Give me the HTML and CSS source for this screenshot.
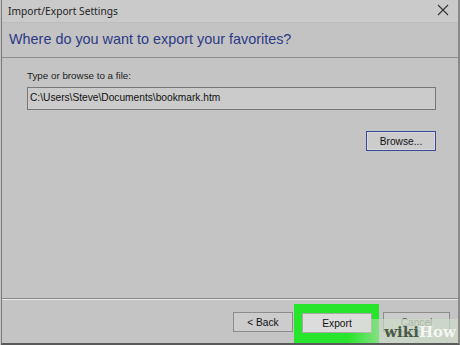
FILE: index.html
```html
<!DOCTYPE html>
<html>
<head>
<meta charset="utf-8">
<link rel="stylesheet" href="styles.css">
</head>
<body>
<div class="window">
  <div class="titlebar">
    <span class="title">Import/Export Settings</span>
    <svg class="close" width="12" height="12" viewBox="0 0 12 12"><path d="M1 1 L11 11 M11 1 L1 11" stroke="#333" stroke-width="1.1" fill="none"/></svg>
  </div>
  <div class="header">Where do you want to export your favorites?</div>
  <div class="content">
    <div class="label">Type or browse to a file:</div>
    <div class="field">C:\Users\Steve\Documents\bookmark.htm</div>
    <div class="browse-row"><div class="btn browse">Browse...</div></div>
  </div>
  <div class="footer">
    <div class="btn back">&lt; Back</div>
    <div class="highlight"><div class="btn export">Export</div></div>
    <div class="btn cancel">Cancel</div>
    <div class="watermark"><span class="wiki">wiki</span><span class="how">How</span></div>
  </div>
</div>
</body>
</html>
```

FILE: styles.css
```css
html, body {
  margin: 0;
  padding: 0;
  background: #c4c4c4;
}
.window {
  position: relative;
  width: 456px;
  height: 343px;
  border-left: 1px solid #7a7a7a;
  border-right: 2px solid #8a8a8a;
  border-bottom: 2px solid #5a5a5a;
  margin-left: 1px;
  background: #c4c4c4;
  display: flex;
  flex-direction: column;
  font-family: "Liberation Sans", Arial, sans-serif;
  overflow: hidden;
}
.titlebar {
  height: 22px;
  background: #cacaca;
  display: flex;
  align-items: center;
  justify-content: space-between;
  padding: 0 9px 0 6px;
  box-sizing: border-box;
}
.title {
  font-family: "Noto Sans", sans-serif;
  font-size: 10.2px;
  color: #222;
}
.close { margin-top: -2px; }
.header {
  height: 36px;
  box-sizing: border-box;
  padding: 6px 0 0 7px;
  background: #c3c3c3;
  border-top: 1px solid #bdbdbd;
  border-bottom: 1px solid #8f8f8f;
  color: #2c3a86;
  font-size: 14.4px;
  line-height: 20px;
}
.content {
  height: 241px;
  box-sizing: border-box;
  padding: 11px 22px 0 25px;
  border-bottom: 1px solid #8a8a8a;
  box-shadow: 0 1px 0 #e6e6e6;
}
.label {
  font-size: 9.8px;
  color: #222;
  line-height: 13px;
}
.field {
  margin-top: 5px;
  height: 23px;
  box-sizing: border-box;
  border: 1px solid #777;
  background: #cbcbcb;
  font-size: 10.2px;
  color: #111;
  padding: 4px 0 0 2px;
}
.browse-row {
  display: flex;
  justify-content: flex-end;
  margin-top: 21px;
}
.btn {
  box-sizing: border-box;
  display: flex;
  align-items: center;
  justify-content: center;
  font-size: 10.2px;
  color: #111;
  background: #cccccc;
  border: 1px solid #8c8c8c;
}
.browse {
  width: 70px;
  height: 20px;
  border: 1px solid #3a4a9a;
  box-shadow: inset 0 0 0 1px #d8d8d8;
}
.footer {
  position: relative;
  flex: 1;
  display: flex;
  align-items: flex-start;
  padding: 12px 0 0 231px;
}
.back {
  width: 60px;
  height: 20px;
  margin-top: 1px;
}
.highlight {
  margin-left: 1px;
  margin-top: -7px;
  padding: 9px 7px 10px 8px;
  background: #27e52a;
}
.export {
  width: 70px;
  height: 20px;
  background: #dcdcdc;
  border: 1px solid #a8a8a8;
}
.cancel {
  width: 67px;
  height: 20px;
  margin-left: 4px;
  margin-top: 1px;
  color: #555;
}
.watermark {
  position: absolute;
  right: 0;
  bottom: 0;
  width: 110px;
  height: 24px;
  padding: 3px 2px 0 0;
  box-sizing: border-box;
  text-align: right;
  background: linear-gradient(to right, rgba(200,215,195,0) 0%, rgba(205,220,200,0.7) 35%, rgba(205,220,200,0.7) 100%);
  font-family: "DejaVu Serif", "Liberation Serif", serif;
  font-weight: bold;
  font-size: 15px;
  line-height: 20px;
}
.wiki { color: #4a5a46; }
.how { color: #f4f6f2; }
```
